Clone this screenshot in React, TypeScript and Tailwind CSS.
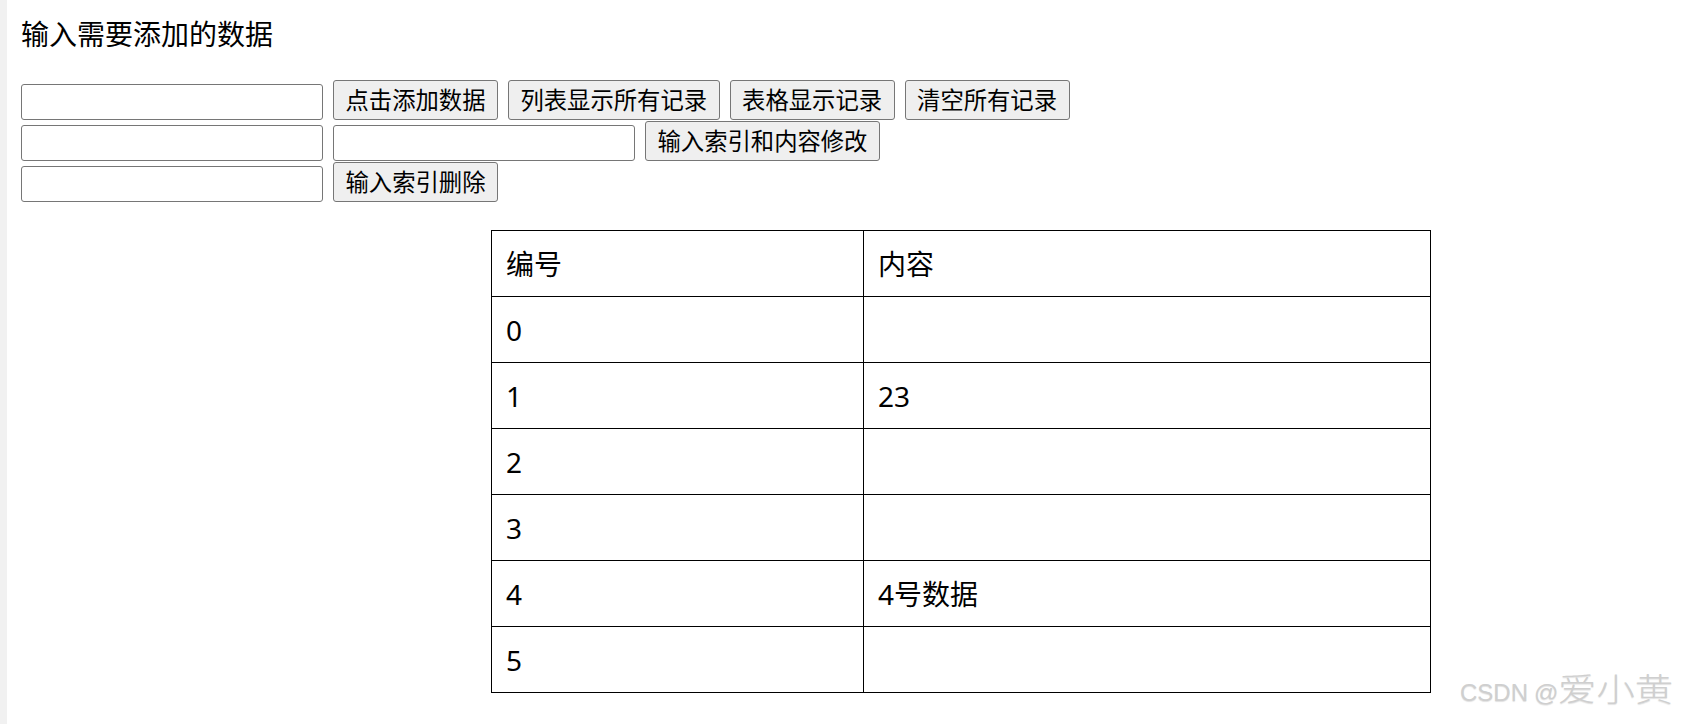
import React from "react";

const rows: { id: number; text: string }[] = [
  { id: 0, text: "" },
  { id: 1, text: "23" },
  { id: 2, text: "" },
  { id: 3, text: "" },
  { id: 4, text: "4号数据" },
  { id: 5, text: "" },
];

const font = "font-['Noto_Sans','Noto_Sans_CJK_SC',sans-serif]";

function Field({ className = "" }: { className?: string }) {
  return (
    <input
      type="text"
      className={`h-[36px] w-[302px] shrink-0 rounded-[3px] border border-[#767676] bg-white px-[3px] text-[23px] outline-none ${className}`}
    />
  );
}

function Btn({ children }: { children: React.ReactNode }) {
  return (
    <button
      type="button"
      className="flex h-[40px] shrink-0 items-center rounded-[3px] border border-[#767676] bg-[#efefef] px-[11.5px] text-[23.33px] leading-[38px] text-black"
    >
      {children}
    </button>
  );
}

export default function App() {
  return (
    <div className={`relative flex min-h-screen bg-white text-black ${font}`}>
      <div className="w-[7px] shrink-0 bg-[#f1f1f1]" />

      <div className="flex-1 pl-[14px] pt-[20px]">
        <h1 className="text-[28px] font-normal leading-[28px]">输入需要添加的数据</h1>

        <div className="mt-[32px] flex flex-col gap-[1px]">
          <div className="flex h-[40px] items-end gap-[10px]">
            <Field />
            <Btn>点击添加数据</Btn>
            <Btn>列表显示所有记录</Btn>
            <Btn>表格显示记录</Btn>
            <Btn>清空所有记录</Btn>
          </div>
          <div className="flex h-[40px] items-end gap-[10px]">
            <Field />
            <Field />
            <Btn>输入索引和内容修改</Btn>
          </div>
          <div className="flex h-[40px] items-end gap-[10px]">
            <Field />
            <Btn>输入索引删除</Btn>
          </div>
        </div>

        <div className="ml-[470px] mt-[28px] w-[940px] border-l border-t border-black">
          <div className="grid grid-cols-[372px_567px]">
            <div className="flex h-[66px] items-center border-b border-r border-black pl-[14px] text-[28px]">编号</div>
            <div className="flex h-[66px] items-center border-b border-r border-black pl-[14px] text-[28px]">内容</div>
            {rows.map((r) => (
              <React.Fragment key={r.id}>
                <div className="flex h-[66px] items-center border-b border-r border-black pl-[14px] text-[28px]">
                  {r.id}
                </div>
                <div className="flex h-[66px] items-center border-b border-r border-black pl-[14px] text-[28px]">
                  {r.text}
                </div>
              </React.Fragment>
            ))}
          </div>
        </div>
      </div>

      {/* watermark */}
      <div className="pointer-events-none absolute left-[1460px] top-[671px] flex items-baseline text-[#cfcfcf] [text-shadow:0_1px_1px_rgba(0,0,0,0.12)]">
        <span className="font-['Liberation_Sans',sans-serif] text-[24px] leading-[28px]">CSDN</span>
        <span className="ml-[6px] font-['Liberation_Sans',sans-serif] text-[24px] leading-[28px]">@</span>
        <span className="w-[115px]">
          <span className="inline-block origin-left scale-x-[1.2] font-['Noto_Sans_CJK_SC',sans-serif] text-[32px] font-light leading-[32px]">
            爱小黄
          </span>
        </span>
      </div>
    </div>
  );
}
